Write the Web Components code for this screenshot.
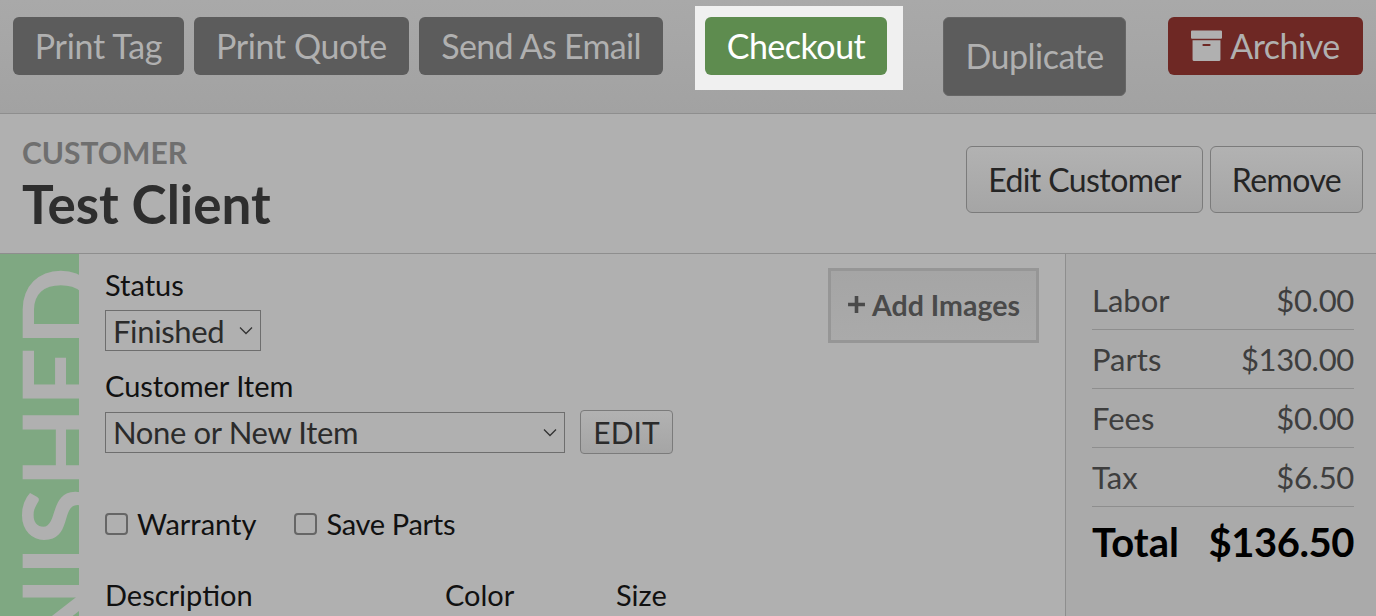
<!DOCTYPE html>
<html>
<head>
<meta charset="utf-8">
<style>
    html, body { margin: 0; height: 100%; overflow: hidden; background: #b0b0b0; font-family: Lato, "Liberation Sans", sans-serif; }
</style>
</head>
<body>
<repair-page></repair-page>

<script>
const shared = `:host{font-family:Lato,"Liberation Sans",sans-serif;box-sizing:border-box;} *{box-sizing:border-box;}`;

class ActionButton extends HTMLElement {
    constructor(){
        super();
        this.attachShadow({mode:'open'});
        this.shadowRoot.innerHTML = `
        <style>
            ${shared}
            :host{display:flex;align-items:center;justify-content:center;height:58px;border-radius:6px;
                  background:#5c5c5c;color:#b0b0b0;font-size:34px;letter-spacing:-.5px;padding:0 0 2px;white-space:nowrap;}
            :host([kind=go]){background:#5e8c4f;color:#fff;}
            :host([kind=danger]){background:#6e2824;}
            :host([kind=tall]){height:79px;border:1px solid #666;}
        </style>
        <slot></slot>`;
    }
}
customElements.define('action-button',ActionButton);

class LightButton extends HTMLElement {
    constructor(){
        super();
        this.attachShadow({mode:'open'});
        this.shadowRoot.innerHTML = `
        <style>
            ${shared}
            :host{display:flex;align-items:center;justify-content:center;height:67px;padding:0;border-radius:6px;
                  border:1px solid #7b7b7b;background:linear-gradient(#b2b2b2,#a5a5a5);color:#252525;font-size:32px;letter-spacing:-.6px;white-space:nowrap;}
            :host([small]){height:44px;font-size:30px;letter-spacing:0;border-radius:4px;color:#2b2b2b;}
        </style>
        <slot></slot>`;
    }
}
customElements.define('light-button',LightButton);

class TopBar extends HTMLElement {
    constructor(){
        super();
        this.attachShadow({mode:'open'});
        this.shadowRoot.innerHTML = `
        <style>
            ${shared}
            :host{display:flex;align-items:flex-start;gap:10px;height:114px;padding:17px 13px 0;
                  background:linear-gradient(#a9a9a9,#a2a2a2);border-bottom:1px solid #8e8e8e;}
            .spot{background:#f0f0f0;padding:11px 16px 15px 10px;margin:-11px 0 0 22px;}
            .dup{margin-left:30px;}
            .arch{margin-left:auto;}
            svg{width:31px;height:31px;margin-right:8px;flex:none;}
        </style>
        <action-button style="width:171px;letter-spacing:-.3px">Print Tag</action-button>
        <action-button style="width:215px;letter-spacing:-.4px">Print Quote</action-button>
        <action-button style="width:244px;letter-spacing:-.7px">Send As Email</action-button>
        <div class="spot"><action-button kind="go" style="width:182px">Checkout</action-button></div>
        <action-button kind="tall" class="dup" style="width:183px">Duplicate</action-button>
        <action-button kind="danger" class="arch" style="width:195px">
            <svg viewBox="0 0 30 30"><path fill="#b0b0b0" d="M0 1.500a1 1 0 0 1 1-1h28a1 1 0 0 1 1 1v6a1 1 0 0 1-1 1H1a1 1 0 0 1-1-1zM1.500 10h27v18.500a1.500 1.500 0 0 1-1.500 1.500H3a1.500 1.500 0 0 1-1.500-1.500z"/><rect x="11" y="13.500" width="8" height="2" rx="1" fill="#6e2824"/></svg>Archive
        </action-button>`;
    }
}
customElements.define('top-bar',TopBar);

class CustomerHeader extends HTMLElement {
    constructor(){
        super();
        this.attachShadow({mode:'open'});
        this.shadowRoot.innerHTML = `
        <style>
            ${shared}
            :host{display:flex;justify-content:space-between;height:140px;padding:0 13px 0 22px;background:#b0b0b0;border-bottom:1px solid #8e8e8e;}
            .label{font-size:30px;font-weight:700;color:#6f6f6f;line-height:36px;margin-top:20px;}
            h1{margin:0;font-size:53px;font-weight:700;color:#2e2e2e;line-height:60px;margin-top:4px;}
            .btns{display:flex;gap:7px;padding-top:32px;align-items:flex-start;}
        </style>
        <div>
            <div class="label">CUSTOMER</div>
            <h1>Test Client</h1>
        </div>
        <div class="btns">
            <light-button style="width:237px">Edit Customer</light-button>
            <light-button style="width:153px">Remove</light-button>
        </div>`;
    }
}
customElements.define('customer-header',CustomerHeader);

class StatusStrip extends HTMLElement {
    constructor(){
        super();
        this.attachShadow({mode:'open'});
        this.shadowRoot.innerHTML = `
        <style>
            ${shared}
            :host{display:block;position:relative;flex:none;width:79px;background:#7fa882;overflow:hidden;}
            span{position:absolute;left:6px;top:224px;transform-origin:0 0;transform:rotate(-90deg) translate(-270px,0);
                 font-size:105px;font-weight:700;line-height:1;color:#b0b0b0;white-space:nowrap;}
        </style>
        <span><slot></slot></span>`;
    }
}
customElements.define('status-strip',StatusStrip);

class FakeSelect extends HTMLElement {
    constructor(){
        super();
        this.attachShadow({mode:'open'});
        this.shadowRoot.innerHTML = `
        <style>
            ${shared}
            :host{display:flex;align-items:center;justify-content:space-between;height:41px;padding:0 7px 0 7px;
                  border:1px solid #6e6e6e;color:#2b2b2b;font-size:31px;letter-spacing:-.35px;}
            svg{width:14px;height:9px;flex:none;margin-left:8px;}
        </style>
        <slot></slot>
        <svg viewBox="0 0 14 9"><path d="M1 1.500l6 6 6-6" fill="none" stroke="#333" stroke-width="1.300"/></svg>`;
    }
}
customElements.define('fake-select',FakeSelect);

class CheckField extends HTMLElement {
    constructor(){
        super();
        this.attachShadow({mode:'open'});
        this.shadowRoot.innerHTML = `
        <style>
            ${shared}
            :host{display:flex;align-items:center;gap:9px;font-size:29px;color:#111;line-height:32px;}
            i{display:block;width:23px;height:22px;border:2px solid #666;border-radius:4px;}
        </style>
        <i></i><slot></slot>`;
    }
}
customElements.define('check-field',CheckField);

class JobForm extends HTMLElement {
    constructor(){
        super();
        this.attachShadow({mode:'open'});
        this.shadowRoot.innerHTML = `
        <style>
            ${shared}
            :host{display:block;flex:1;position:relative;padding:15px 26px 0;font-size:29px;color:#111;}
            .top{display:flex;justify-content:space-between;align-items:flex-start;}
            label{display:block;line-height:32px;}
            .status{margin-top:9px;width:156px;}
            .item-label{margin-top:19px;}
            .row{display:flex;align-items:center;gap:15px;margin-top:8px;}
            .item{width:460px;}
            .edit{width:93px;}
            .checks{display:flex;gap:38px;margin-top:54px;}
            .cols{display:flex;margin-top:39px;}
            .cols label:nth-child(1){width:340px;}
            .cols label:nth-child(2){width:171px;}
            .add{display:flex;align-items:center;justify-content:center;gap:6px;width:211px;height:75px;margin-top:-1px;padding-bottom:2px;
                 border:3px solid #969696;background:linear-gradient(#a5a5a5,#aaaaaa);
                 color:#4a4a4a;font-weight:700;font-size:28.5px;}
            .add svg{width:19px;height:19px;}
        </style>
        <div class="top">
            <div>
                <label>Status</label>
                <fake-select class="status">Finished</fake-select>
            </div>
            <div class="add"><svg viewBox="0 0 18 18"><path d="M7.300 1h3.400v6.300H17v3.400h-6.300V17H7.300v-6.300H1V7.300h6.300z" fill="#4a4a4a"/></svg>Add Images</div>
        </div>
        <label class="item-label">Customer Item</label>
        <div class="row">
            <fake-select class="item">None or New Item</fake-select>
            <light-button small class="edit">EDIT</light-button>
        </div>
        <div class="checks">
            <check-field>Warranty</check-field>
            <check-field style="letter-spacing:-.3px">Save Parts</check-field>
        </div>
        <div class="cols">
            <label>Description</label>
            <label>Color</label>
            <label>Size</label>
        </div>`;
    }
}
customElements.define('job-form',JobForm);

class TotalRow extends HTMLElement {
    static get observedAttributes(){
        return ['amount'];
    }
    constructor(){
        super();
        this.attachShadow({mode:'open'});
        this.shadowRoot.innerHTML = `
        <style>
            ${shared}
            :host{display:flex;justify-content:space-between;align-items:center;height:59px;border-bottom:1px solid #8e8e8e;
                  font-size:31px;color:#3e3e3e;}
            #amt{letter-spacing:-.3px;}
            :host([grand]){border-bottom:none;height:69px;font-size:40px;font-weight:700;color:#000;}
            :host([grand]) #amt{letter-spacing:-.45px;}
        </style>
        <span><slot></slot></span><span id="amt"></span>`;
    }
    attributeChangedCallback(attr,oldVal,newVal){
        this.shadowRoot.getElementById('amt').textContent = newVal;
    }
}
customElements.define('total-row',TotalRow);

class TotalsPanel extends HTMLElement {
    constructor(){
        super();
        this.attachShadow({mode:'open'});
        this.shadowRoot.innerHTML = `
        <style>
            ${shared}
            :host{display:block;flex:none;width:311px;padding:17px 22px 0 26px;background:#aaaaaa;border-left:1px solid #8e8e8e;}
        </style>
        <total-row amount="$0.00">Labor</total-row>
        <total-row amount="$130.00">Parts</total-row>
        <total-row amount="$0.00">Fees</total-row>
        <total-row amount="$6.50">Tax</total-row>
        <total-row grand amount="$136.50">Total</total-row>`;
    }
}
customElements.define('totals-panel',TotalsPanel);

class RepairPage extends HTMLElement {
    constructor(){
        super();
        this.attachShadow({mode:'open'});
        this.shadowRoot.innerHTML = `
        <style>
            ${shared}
            :host{display:flex;flex-direction:column;height:616px;overflow:hidden;}
            main{display:flex;flex:1;min-height:0;}
        </style>
        <top-bar></top-bar>
        <customer-header></customer-header>
        <main>
            <status-strip>FINISHED</status-strip>
            <job-form></job-form>
            <totals-panel></totals-panel>
        </main>`;
    }
}
customElements.define('repair-page',RepairPage);
</script>
</body>
</html>
